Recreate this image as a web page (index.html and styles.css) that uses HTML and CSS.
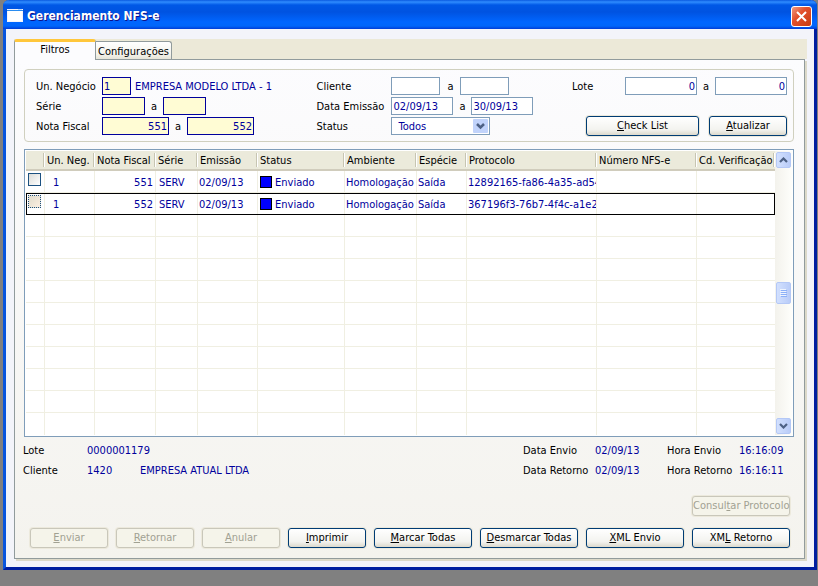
FILE: index.html
```html
<!DOCTYPE html>
<html lang="pt-BR">
<head>
  <meta charset="UTF-8" />
  <meta name="viewport" content="width=device-width, initial-scale=1.0" />
  <title>Gerenciamento NFS-e</title>
  <link rel="stylesheet" href="styles.css">
</head>
<body>

  <div class="window">
    <header class="titlebar">
      <svg class="app-icon" width="16" height="14" viewBox="0 0 16 14">
        <rect x="0.5" y="0.5" width="15" height="12" fill="#fff" stroke="#f4f4fa"/>
        <path d="M0 1.5h16" stroke="#2a8cf0"/>
        <path d="M11 0.5h4" stroke="#b8d8ff"/>
      </svg>
      <h1>Gerenciamento NFS-e</h1>
      <button class="close" type="button" aria-label="Fechar">
        <svg width="11" height="11" viewBox="0 0 11 11"><path d="M1 1l9 9M10 1l-9 9" stroke="#fff" stroke-width="2"/></svg>
      </button>
    </header>

    <main class="client">
      <div class="tabs" role="tablist">
        <button class="tab active" type="button" role="tab" aria-selected="true">Filtros</button>
        <button class="tab" type="button" role="tab" aria-selected="false">Configurações</button>
      </div>

      <div class="panel">
        <form class="filters">
          <div class="group">
            <div class="line">
              <label for="negocio">Un. Negócio</label>
              <input class="req w-code" type="text" id="negocio" value="1">
              <output class="company" for="negocio">EMPRESA MODELO LTDA - 1</output>
            </div>
            <div class="line">
              <label for="serie1">Série</label>
              <input class="req w-serie" type="text" id="serie1">
              <label class="to" for="serie2">a</label>
              <input class="req w-serie" type="text" id="serie2">
            </div>
            <div class="line">
              <label for="nota1">Nota Fiscal</label>
              <input class="req num w-nota" type="text" id="nota1" value="551">
              <label class="to" for="nota2">a</label>
              <input class="req num w-nota" type="text" id="nota2" value="552">
            </div>
          </div>

          <div class="group group-mid">
            <div class="line">
              <label for="cliente1">Cliente</label>
              <input class="w-cliente" type="text" id="cliente1">
              <label class="to to-wide" for="cliente2">a</label>
              <input class="w-cliente" type="text" id="cliente2">
            </div>
            <div class="line">
              <label for="data1">Data Emissão</label>
              <input class="w-data" type="text" id="data1" value="02/09/13">
              <label class="to" for="data2">a</label>
              <input class="w-data" type="text" id="data2" value="30/09/13">
            </div>
            <div class="line">
              <label for="status">Status</label>
              <div class="combo">
                <select id="status">
                  <option>Todos</option>
                  <option>Enviado</option>
                </select>
                <svg width="15" height="14" viewBox="0 0 15 14">
                  <rect width="15" height="14" rx="1" fill="#c1d3fb"/>
                  <path d="M4 5l3.500 3.500L11 5" fill="none" stroke="#4d6185" stroke-width="2.500"/>
                </svg>
              </div>
            </div>
          </div>

          <div class="group group-end">
            <div class="line">
              <label for="lote1">Lote</label>
              <input class="num w-lote" type="text" id="lote1" value="0">
              <label class="to" for="lote2">a</label>
              <input class="num w-lote" type="text" id="lote2" value="0">
            </div>
            <div class="line actions">
              <button class="btn btn-wide" type="button"><u>C</u>heck List</button>
              <button class="btn" type="button"><u>A</u>tualizar</button>
            </div>
          </div>
        </form>

        <div class="grid">
          <table>
            <colgroup>
              <col class="c-check"><col class="c-neg"><col class="c-nota"><col class="c-serie">
              <col class="c-emissao"><col class="c-status"><col class="c-amb"><col class="c-esp">
              <col class="c-prot"><col class="c-num"><col>
            </colgroup>
            <thead>
              <tr>
                <th></th><th>Un. Neg.</th><th>Nota Fiscal</th><th>Série</th><th>Emissão</th><th>Status</th>
                <th>Ambiente</th><th>Espécie</th><th>Protocolo</th><th>Número NFS-e</th><th>Cd. Verificação</th>
              </tr>
            </thead>
            <tbody>
              <tr>
                <td class="check"><input type="checkbox" aria-label="Nota 551"></td>
                <td class="neg">1</td><td class="num">551</td><td class="serie">SERV</td><td>02/09/13</td>
                <td><span class="flag"></span>Enviado</td><td>Homologação</td><td>Saída</td>
                <td>12892165-fa86-4a35-ad54</td><td></td><td></td>
              </tr>
              <tr class="current">
                <td class="check"><input type="checkbox" aria-label="Nota 552"></td>
                <td class="neg">1</td><td class="num">552</td><td class="serie">SERV</td><td>02/09/13</td>
                <td><span class="flag"></span>Enviado</td><td>Homologação</td><td>Saída</td>
                <td>367196f3-76b7-4f4c-a1e2</td><td></td><td></td>
              </tr>
              <tr><td></td><td></td><td></td><td></td><td></td><td></td><td></td><td></td><td></td><td></td><td></td></tr>
              <tr><td></td><td></td><td></td><td></td><td></td><td></td><td></td><td></td><td></td><td></td><td></td></tr>
              <tr><td></td><td></td><td></td><td></td><td></td><td></td><td></td><td></td><td></td><td></td><td></td></tr>
              <tr><td></td><td></td><td></td><td></td><td></td><td></td><td></td><td></td><td></td><td></td><td></td></tr>
              <tr><td></td><td></td><td></td><td></td><td></td><td></td><td></td><td></td><td></td><td></td><td></td></tr>
              <tr><td></td><td></td><td></td><td></td><td></td><td></td><td></td><td></td><td></td><td></td><td></td></tr>
              <tr><td></td><td></td><td></td><td></td><td></td><td></td><td></td><td></td><td></td><td></td><td></td></tr>
              <tr><td></td><td></td><td></td><td></td><td></td><td></td><td></td><td></td><td></td><td></td><td></td></tr>
              <tr><td></td><td></td><td></td><td></td><td></td><td></td><td></td><td></td><td></td><td></td><td></td></tr>
              <tr><td></td><td></td><td></td><td></td><td></td><td></td><td></td><td></td><td></td><td></td><td></td></tr>
            </tbody>
          </table>

          <div class="scrollbar">
            <button type="button" aria-label="Subir">
              <svg width="9" height="6" viewBox="0 0 9 6"><path d="M1 5l3.500 -3.500L8 5" fill="none" stroke="#4d6185" stroke-width="2.200"/></svg>
            </button>
            <div class="thumb">
              <svg width="7" height="8" viewBox="0 0 7 8"><path d="M0 0.500h6M0 2.500h6M0 4.500h6M0 6.500h6" stroke="#eef4fe"/><path d="M1 1.500h6M1 3.500h6M1 5.500h6M1 7.500h6" stroke="#8cb0f8"/></svg>
            </div>
            <button type="button" aria-label="Descer">
              <svg width="9" height="6" viewBox="0 0 9 6"><path d="M1 1l3.500 3.500L8 1" fill="none" stroke="#4d6185" stroke-width="2.200"/></svg>
            </button>
          </div>
        </div>

        <div class="details">
          <span>Lote</span><b>0000001179</b><b></b>
          <span>Data Envio</span><b>02/09/13</b><span>Hora Envio</span><b>16:16:09</b>
          <span>Cliente</span><b>1420</b><b>EMPRESA ATUAL LTDA</b>
          <span>Data Retorno</span><b>02/09/13</b><span>Hora Retorno</span><b>16:16:11</b>
        </div>

        <footer class="footer">
          <button class="btn btn-large" type="button" disabled>Consul<u>t</u>ar Protocolo</button>
          <div class="buttons">
            <button class="btn" type="button" disabled><u>E</u>nviar</button>
            <button class="btn" type="button" disabled><u>R</u>etornar</button>
            <button class="btn" type="button" disabled><u>A</u>nular</button>
            <button class="btn" type="button"><u>I</u>mprimir</button>
            <button class="btn btn-large" type="button"><u>M</u>arcar Todas</button>
            <button class="btn btn-large" type="button"><u>D</u>esmarcar Todas</button>
            <button class="btn btn-large" type="button"><u>X</u>ML Envio</button>
            <button class="btn btn-large" type="button">XM<u>L</u> Retorno</button>
          </div>
        </footer>
      </div>
    </main>
  </div>

</body>
</html>
```

FILE: styles.css
```css
* {
  box-sizing: border-box;
  margin: 0;
  padding: 0;
}

body {
  background: #808080;
  padding: 0 1px 0 3px;
  font-family: Tahoma, "DejaVu Sans Condensed", sans-serif;
  font-size: 11px;
  line-height: 14px;
  color: #000;
}

input,
select,
button {
  font: inherit;
}

.window {
  border: 3px solid;
  border-top: none;
  border-color: #0831d9 #001ea0 #001ea0 #0855dd;
  border-radius: 6px 6px 0 0;
  background: #f3f4fa;
}

/* barra de título */
.titlebar {
  display: flex;
  align-items: center;
  gap: 4px;
  height: 29px;
  margin: 0 -3px;
  padding: 3px 5px 0 4px;
  border-radius: 6px 6px 0 0;
  background: linear-gradient(to bottom, #0a5ae0 0, #2f8cff 2px, #0058e6 5px, #0053e1 12px, #0066ff 22px, #0066fa 26px, #003dd7 29px);
}

.titlebar h1 {
  flex: 1;
  font-size: 12px;
  font-weight: bold;
  line-height: 16px;
  color: #fff;
  text-shadow: 1px 1px 0 #0f1089;
}

.close {
  display: flex;
  align-items: center;
  justify-content: center;
  width: 21px;
  height: 21px;
  border: 1px solid #fff;
  border-radius: 3px;
  background: linear-gradient(135deg, #f09a80, #e2502c 40%, #c83c12);
}

.client {
  padding: 10px 7px 8px 8px;
}

/* abas */
.tabs {
  display: flex;
  align-items: flex-end;
  height: 20px;
  background: #ece9d8;
}

.tab {
  width: 76px;
  height: 18px;
  padding-top: 2px;
  border: 1px solid #919b9c;
  border-left: none;
  border-bottom: none;
  border-radius: 0 3px 0 0;
  background: linear-gradient(to bottom, #fff, #f4f3ec 70%, #e6e4d8);
  color: #000;
  white-space: nowrap;
}

.tab.active {
  position: relative;
  width: 82px;
  height: 21px;
  margin-bottom: -1px;
  padding: 0 0 2px;
  border-left: 1px solid #919b9c;
  border-top: 3px solid #ffc73c;
  border-radius: 3px 3px 0 0;
  background: #fcfcfe;
}

.panel {
  margin-right: 2px;
  padding: 9px 10px 10px 9px;
  border: 1px solid #919b9c;
  background: linear-gradient(to bottom, #fcfcfe, #f4f3ee);
  box-shadow: 2px 2px 0 #dcd9c9;
}

/* filtros */
.filters {
  display: flex;
  padding: 6px 6px 5px 11px;
  border: 1px solid #d0d0bf;
  border-radius: 4px;
}

.group {
  flex: 281 0 0;
}

.group-mid {
  flex: 256 0 0;
}

.group-end {
  display: flex;
  flex: 214 0 0;
  flex-direction: column;
  justify-content: space-between;
}

.line {
  display: flex;
  align-items: center;
  height: 20px;
}

.line label,
.company {
  padding-top: 2px;
}

.line label {
  width: 66px;
  white-space: nowrap;
}

.group-mid .line label {
  width: 75px;
}

.group-end .line label {
  width: 53px;
}

.line .to,
.group-mid .line .to,
.group-end .line .to {
  width: 18px;
  text-align: center;
}

.group-mid .line .to-wide {
  width: 20px;
}

.line input {
  height: 18px;
  padding: 0 1px;
  border: 1px solid #7f9db9;
  background: #fff;
  color: #00009c;
}

.line input.req {
  border-color: #00009c;
  background: #fffcd4;
}

.num {
  text-align: right;
}

.w-code { width: 29px; }
.w-serie { width: 43px; }
.w-nota { width: 67px; }
.w-cliente { width: 49px; }
.w-data { width: 62px; }
.w-lote { width: 72px; }

.company {
  margin-left: 4px;
  color: #00009c;
  white-space: nowrap;
}

.combo {
  position: relative;
  width: 99px;
  height: 18px;
}

.combo select {
  appearance: none;
  width: 100%;
  height: 18px;
  padding: 1px 18px 0 6px;
  border: 1px solid #7f9db9;
  border-radius: 0;
  background: #fff;
  color: #00009c;
}

.combo svg {
  position: absolute;
  top: 2px;
  right: 2px;
  pointer-events: none;
}

.actions {
  justify-content: flex-end;
  gap: 10px;
}

/* botões */
.btn {
  width: 78px;
  height: 20px;
  border: 1px solid #003c74;
  border-radius: 3px;
  background: linear-gradient(to bottom, #fff, #f3f3ef 70%, #dcd9cc);
  box-shadow: 0 0 0 1px #ece9dc;
  color: #000;
  line-height: 16px;
  text-align: center;
  white-space: nowrap;
}

.btn-wide {
  width: 113px;
}

.btn-large {
  width: 98px;
}

.btn:disabled {
  border-color: #c9c7ba;
  background: #f5f4ea;
  color: #a1a192;
}

/* lista de notas */
.grid {
  display: flex;
  margin-top: 7px;
  padding: 1px;
  border: 1px solid #7f9db9;
  background: #fff;
}

.grid table {
  flex: 1;
  width: 0;
  table-layout: fixed;
  border-collapse: separate;
  border-spacing: 0;
}

.c-check { width: 19px; }
.c-neg { width: 50px; }
.c-nota { width: 61px; }
.c-serie { width: 42px; }
.c-emissao { width: 60px; }
.c-status { width: 87px; }
.c-amb { width: 72px; }
.c-esp { width: 50px; }
.c-prot { width: 130px; }
.c-num { width: 100px; }

th {
  height: 20px;
  padding: 2px 0 0 2px;
  border-bottom: 2px solid #d0ccbc;
  background: linear-gradient(#c7c5b2, #c7c5b2) right 1px center / 1px 14px no-repeat, linear-gradient(#fff, #fff) right center / 1px 14px no-repeat, #ebeadb;
  font-weight: normal;
  text-align: left;
  white-space: nowrap;
}

td {
  height: 22px;
  padding: 2px 0 0 1px;
  border-right: 1px solid #f0efe2;
  border-bottom: 1px solid #f0efe2;
  color: #00009c;
  overflow: hidden;
  white-space: nowrap;
}

td:last-child {
  border-right: none;
}

tbody tr:last-child td {
  border-bottom: none;
}

td.num {
  padding-right: 2px;
}

td.neg {
  padding-left: 8px;
}

td.serie {
  padding-left: 3px;
}

td.check {
  padding: 0 0 0 2px;
}

.current {
  outline: 1px solid #000;
  outline-offset: -1px;
}

.check input {
  appearance: none;
  display: block;
  width: 13px;
  height: 13px;
  margin-bottom: 4px;
  border: 1px solid #1c5180;
  background: linear-gradient(135deg, #dcdcd7, #fff);
}

.current .check input {
  border-style: dotted;
  background: linear-gradient(135deg, #e0dccc, #fbeee0);
}

.flag {
  display: inline-block;
  width: 12px;
  height: 12px;
  margin: -2px 3px 0 1px;
  border: 1px solid #000;
  background: #0000ff;
  vertical-align: middle;
}

.scrollbar {
  display: flex;
  flex-direction: column;
  justify-content: space-between;
  width: 17px;
  padding: 1px;
  background: linear-gradient(to right, #f3f2ec, #fefefb);
}

.scrollbar button,
.thumb {
  display: flex;
  align-items: center;
  justify-content: center;
  height: 16px;
  border: 1px solid #b4c8f6;
  border-radius: 2px;
  background: linear-gradient(to right, #d2e0fe, #b9ccf8);
}

.scrollbar .thumb {
  height: 22px;
}

/* detalhes da nota */
.details {
  display: grid;
  grid-template-columns: 64px 53px 1fr 72px 72px 72px 55px;
  grid-auto-rows: 20px;
  align-items: center;
  margin: 4px 0 0 -1px;
  white-space: nowrap;
}

.details b {
  color: #00009c;
  font-weight: normal;
}

/* rodapé */
.footer {
  display: flex;
  flex-direction: column;
  align-items: flex-end;
  gap: 12px;
  margin-top: 15px;
  padding: 0 4px 0 6px;
}

.buttons {
  display: flex;
  justify-content: space-between;
  width: 100%;
}
```
